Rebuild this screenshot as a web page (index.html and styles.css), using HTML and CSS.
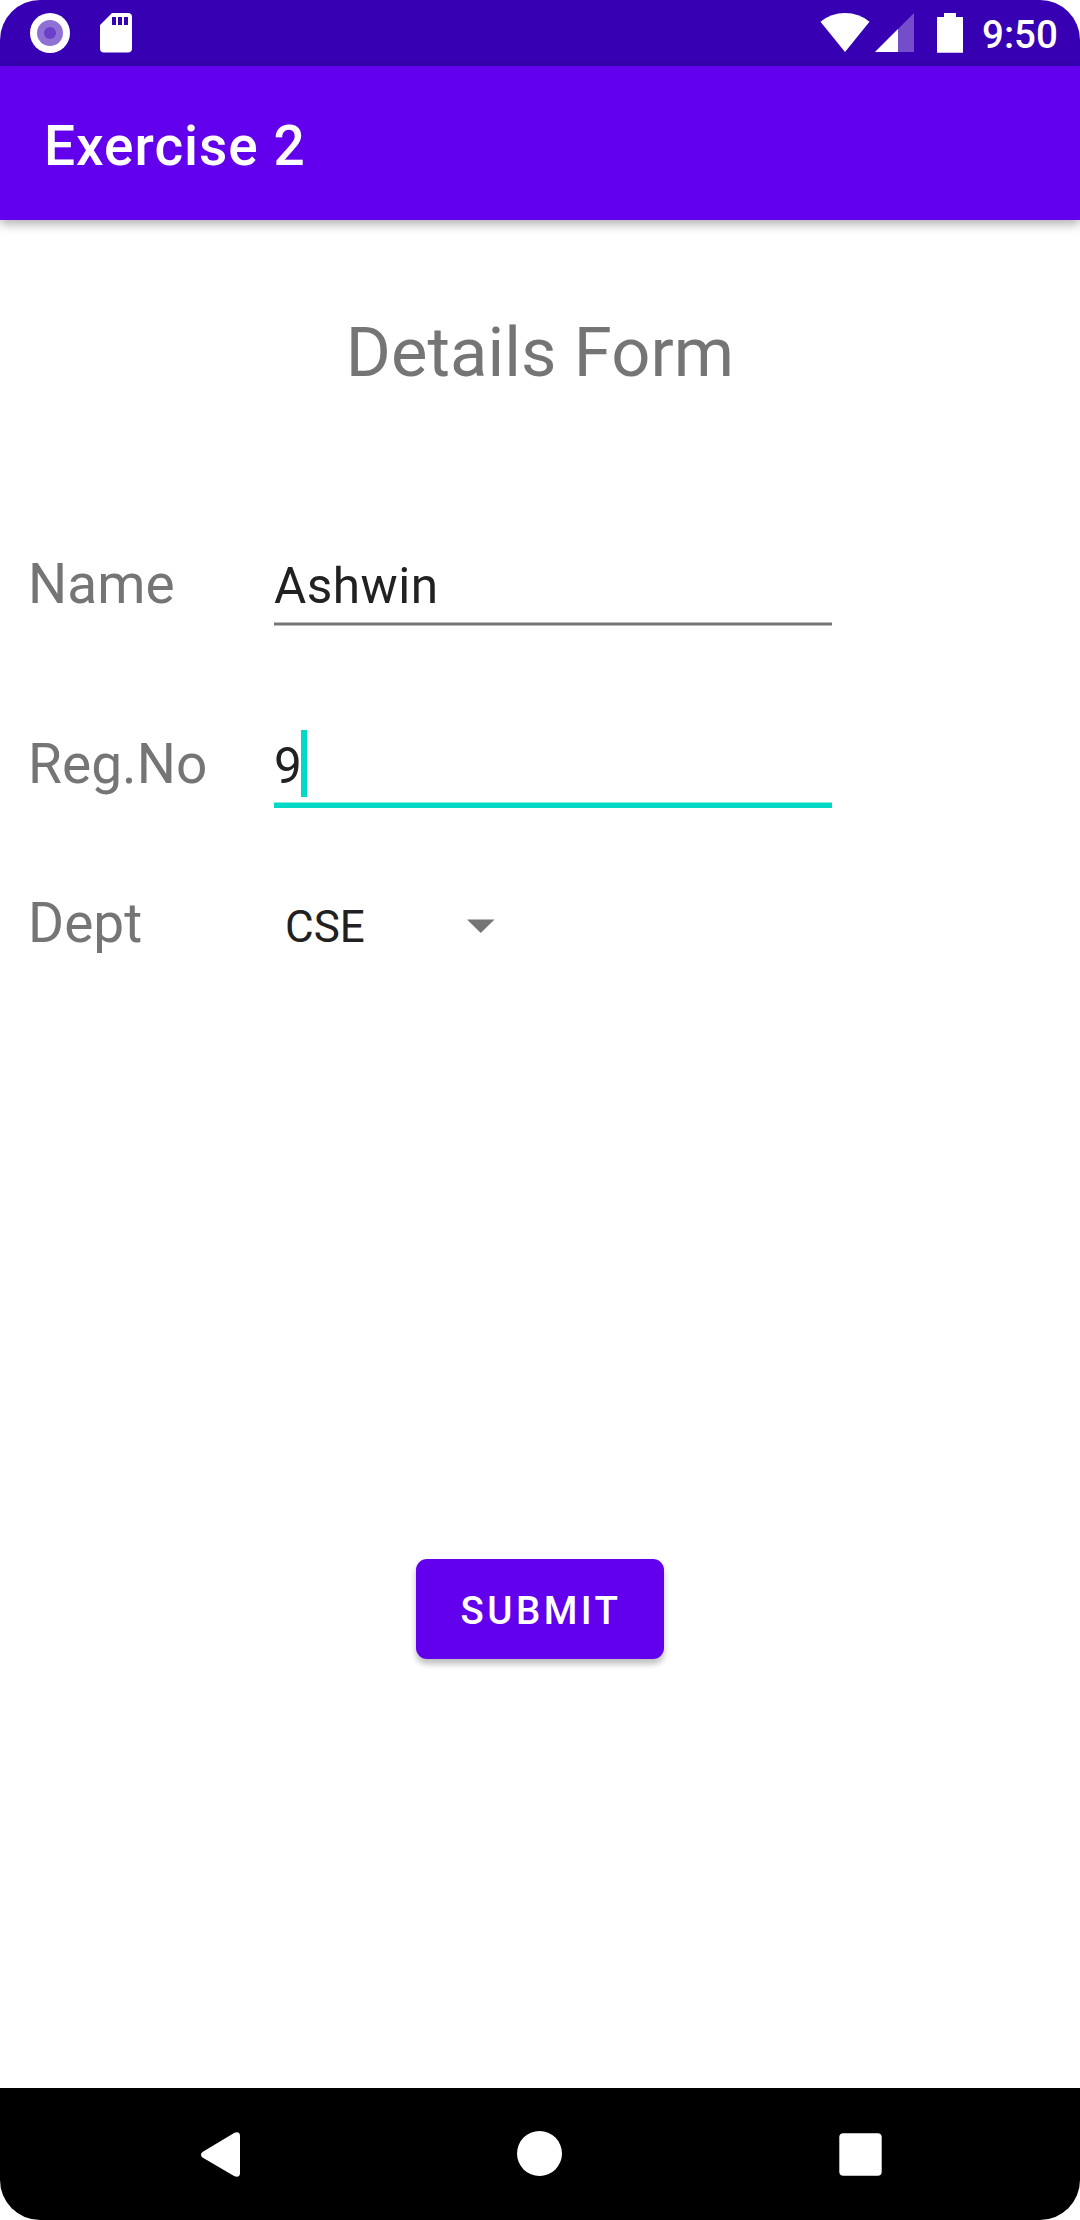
FILE: index.html
```html
<!DOCTYPE html>
<html lang="en">
<head>
<meta charset="utf-8">
<title>Exercise 2</title>
<link rel="stylesheet" href="styles.css">
</head>
<body>
<div class="screen">
  <header class="status-bar">
    <svg class="icon-record" width="40" height="40" viewBox="0 0 40 40"><circle cx="20" cy="20" r="20" fill="#fff"/><circle cx="20" cy="20" r="13" fill="#8f70d5"/><circle cx="20" cy="20" r="6" fill="#6c3fc8"/></svg>
    <svg class="icon-sd" width="32" height="40" viewBox="0 0 32 40"><path fill="#fff" fill-rule="evenodd" d="M12 0H28Q32 0 32 4V35.500Q32 39.500 28 39.500H4Q0 39.500 0 35.500V12ZM12 4V12H16V4ZM18 4V12H22V4ZM24 4V12H28V4Z"/></svg>
    <svg class="icon-wifi" width="50" height="40" viewBox="0 0 50 40"><path fill="#fff" d="M.5 8.700Q11 0 25 0Q39 0 49.500 8.700L25 39Z"/></svg>
    <svg class="icon-signal" width="39" height="40" viewBox="0 0 39 40"><path fill="#fff" fill-opacity=".3" d="M39 0V39H0Z"/><path fill="#fff" d="M23 16V39H0Z"/></svg>
    <svg class="icon-battery" width="26" height="40" viewBox="0 0 26 40"><path fill="#fff" d="M7 0H19V4H26V39.700H0V4H7Z"/></svg>
    <span class="clock">9:50</span>
  </header>
  <div class="app-bar"><h1 class="app-title">Exercise 2</h1></div>
  <main class="content">
    <h2 class="form-title">Details Form</h2>
    <div class="row row-name">
      <span class="label">Name</span>
      <div class="field"><div class="value">Ashwin</div><div class="underline"></div></div>
    </div>
    <div class="row row-reg">
      <span class="label">Reg.No</span>
      <div class="field"><div class="value">9<span class="caret"></span></div><div class="underline underline-active"></div></div>
    </div>
    <div class="row row-dept">
      <span class="label">Dept</span>
      <div class="spinner"><span class="choice">CSE</span><svg class="arrow" width="28" height="14" viewBox="0 0 28 14"><path fill="#757575" d="M0 .5H27.500L13.750 14Z"/></svg></div>
    </div>
    <button class="submit">SUBMIT</button>
  </main>
  <nav class="nav-bar">
    <svg class="nav-back" width="39" height="45" viewBox="0 0 39 45"><path fill="#fff" d="M1.500 20L33.500 .7Q38.500 -1 39 3.500V41.500Q38.500 46 33.500 44.300L1.500 25.500Q-1.500 22.700 1.500 20Z"/></svg>
    <svg class="nav-home" width="45" height="45" viewBox="0 0 45 45"><circle cx="22.500" cy="22.500" r="22.500" fill="#fff"/></svg>
    <svg class="nav-recent" width="43" height="43" viewBox="0 0 43 43"><rect x=".3" y=".3" width="42.400" height="42.400" rx="4" fill="#fff"/></svg>
  </nav>
</div>
</body>
</html>
```
FILE: styles.css
```css
* { box-sizing: border-box; }
body { margin: 0; background: #fff; font-family: Roboto, sans-serif; }
svg { display: block; flex: none; }
.screen {
  width: 1080px;
  height: 2220px;
  display: flex;
  flex-direction: column;
  overflow: hidden;
  border-radius: 40px;
  background: #fff;
}
.status-bar {
  height: 66px;
  padding: 13px 0 0 30px;
  display: flex;
  align-items: flex-start;
  background: #3700b3;
  color: #fff;
}
.icon-sd { margin-left: 30px; }
.icon-wifi { margin-left: 688px; }
.icon-signal { margin-left: 5px; }
.icon-battery { margin-left: 23px; }
.clock {
  margin-left: 19px;
  font-size: 38.5px;
  font-weight: 500;
  line-height: 44px;
}
.app-bar {
  position: relative;
  height: 154px;
  padding: 6px 44px 0;
  display: flex;
  align-items: center;
  background: #6200ee;
  box-shadow: 0 4px 10px rgba(0, 0, 0, .32);
}
.app-title {
  margin: 0;
  font-size: 55px;
  font-weight: 500;
  line-height: 66px;
  letter-spacing: .0175em;
  color: #fff;
}
.content { flex: 1; display: flex; flex-direction: column; }
.form-title {
  margin: 93px 0 0;
  font-size: 68.75px;
  font-weight: 400;
  line-height: 80px;
  letter-spacing: .001em;
  text-align: center;
  color: #757575;
}
.row {
  height: 84px;
  padding-left: 28px;
  display: grid;
  grid-template-columns: 246px 558px;
  align-items: start;
}
.row-name { margin-top: 151px; }
.row-reg { margin-top: 96px; }
.row-dept { margin-top: 75px; }
.label {
  font-size: 55px;
  line-height: 80px;
  letter-spacing: .001em;
  color: #757575;
}
.value {
  height: 78px;
  padding-top: 6px;
  display: flex;
  font-size: 49.5px;
  line-height: 72px;
  letter-spacing: .009375em;
  color: #212121;
}
.caret { width: 6px; height: 67px; margin-left: -1px; background: #03dac5; }
.underline {
  height: 4px;
  background: #757575;
  border: solid #bababa;
  border-width: 1px 0;
}
.underline-active { height: 6px; background: #03dac5; border: 0; border-top: 1px solid #81ece2; }
.spinner { padding: 4px 0 0 11px; display: flex; }
.choice { width: 182px; font-size: 44px; line-height: 80px; color: #212121; }
.arrow { margin-top: 32px; }
.submit {
  width: 248px;
  height: 100px;
  margin: 592px auto 0;
  padding: 4px 0 0 2px;
  border: 0;
  border-radius: 11px;
  background: #6200ee;
  box-shadow: 0 5px 6px rgba(0, 0, 0, .26);
  font: 500 38.5px/46px Roboto, sans-serif;
  letter-spacing: .0893em;
  color: #fff;
}
.nav-bar {
  height: 132px;
  padding: 43px 0 0 201px;
  display: flex;
  background: #000;
}
.nav-back { margin-top: 1px; }
.nav-home { margin-left: 277px; }
.nav-recent { margin: 2px 0 0 277px; }
```
